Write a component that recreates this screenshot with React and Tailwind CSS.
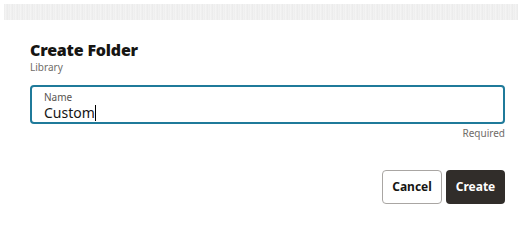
import React from 'react';

const CreateFolder = () => {
  return (
    <div className="w-[518px] h-[216px] bg-white overflow-hidden font-['Noto_Sans',sans-serif] text-[#161513]">
      {/* blurred header strip */}
      <div className="ml-[4px] mt-[4px] h-[16px] bg-[repeating-linear-gradient(90deg,#ececec_0px,#f6f6f6_2px,#e9e9e9_3px,#f4f4f4_5px)]" />

      <div className="pl-[30px] pr-[13px] pt-[20px]">
        <h1 className="text-[16px] leading-[20px] font-black tracking-[-0.2px]">Create Folder</h1>
        <p className="text-[10px] leading-[14px] text-[#6f6c69]">Library</p>

        <div className="mt-[11px] h-[39px] border-2 border-[#1f7a9a] rounded-[4px] pl-[12px] pt-[4px]">
          <div className="text-[10px] leading-[12px] text-[#57534f]">Name</div>
          <div className="flex items-center mt-[2px] text-[14px] leading-[16px] text-[#161513]">
            <span>Custom</span>
            <span className="inline-block w-px h-[16px] bg-black" />
          </div>
        </div>
        <div className="text-right text-[10px] leading-[14px] text-[#6f6c69] mt-[2px]">Required</div>

        <div className="flex justify-end gap-[4px] mt-[30px]">
          <button className="w-[60px] h-[34px] border border-[#a9a6a3] rounded-[4px] bg-white text-[12px] font-bold">
            Cancel
          </button>
          <button className="w-[59px] h-[34px] rounded-[4px] bg-[#312d2a] text-white text-[12px] font-bold">
            Create
          </button>
        </div>
      </div>
    </div>
  );
};

export default function App() {
  return <CreateFolder />;
}
